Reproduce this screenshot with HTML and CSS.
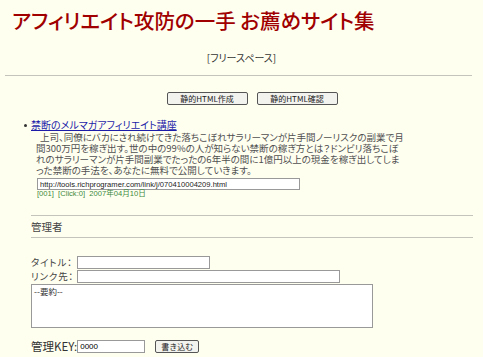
FILE: index.html
```html
<!DOCTYPE html>
<html lang="ja">
<head>
    <meta charset="UTF-8">
    <title>アフィリエイト攻防の一手 お薦めサイト集</title>
    <link rel="stylesheet" href="styles.css">
</head>
<body>
    <h1 class="site-title">アフィリエイト攻防の一手 お薦めサイト集</h1>

    <!-- フリースペース -->
    <div class="free-space">[フリースペース]</div>
    <hr class="rule">

    <div class="tools">
        <button class="btn btn-wide">静的HTML作成</button>
        <button class="btn btn-wide">静的HTML確認</button>
    </div>

    <!-- 登録サイト一覧 -->
    <ul class="entries">
        <li class="entry">
            <a class="entry-link" href="#">禁断のメルマガアフィリエイト講座</a>
            <p class="entry-desc">上司、同僚にバカにされ続けてきた落ちこぼれサラリーマンが片手間ノーリスクの副業で月<br>間300万円を稼ぎ出す。世の中の99%の人が知らない禁断の稼ぎ方とは？ドンビリ落ちこぼ<br>れのサラリーマンが片手間副業でたったの6年半の間に1億円以上の現金を稼ぎ出してしま<br>った禁断の手法を、あなたに無料で公開していきます。</p>
            <input class="entry-url" type="text" value="http://tools.richprogramer.com/link/j/070410004209.html">
            <div class="entry-meta">[001]&nbsp; [Click:0]&nbsp; 2007年04月10日</div>
        </li>
    </ul>

    <!-- 管理者 -->
    <hr class="rule rule-sub">
    <div class="admin-head">管理者</div>
    <hr class="rule rule-sub">

    <form class="admin-form">
        <div class="field-row">
            <label class="field-label">タイトル：</label>
            <input class="field-input title-input" type="text">
        </div>
        <div class="field-row">
            <label class="field-label">リンク先：</label>
            <input class="field-input link-input" type="text">
        </div>
        <textarea class="summary">--要約--</textarea>
        <div class="key-row">
            <label class="key-label">管理KEY:</label>
            <input class="field-input key-input" type="text" value="0000">
            <button class="btn btn-write" type="button">書き込む</button>
        </div>
    </form>
</body>
</html>
```

FILE: styles.css
```css
body {
    margin: 0;
    background: #fffff0;
    font-family: "Noto Sans CJK JP", "Liberation Sans", sans-serif;
    font-feature-settings: "palt";
    color: #444;
}
.site-title {
    margin: 0;
    padding: 8px 0 0 12px;
    font-size: 20.5px;
    line-height: 24px;
    font-weight: 500;
    color: #a00000;
}
.free-space {
    margin-top: 19px;
    text-align: center;
    font-size: 10px;
    line-height: 14px;
    color: #333;
}
.rule {
    margin: 10px 11px 0 5px;
    border: none;
    border-top: 1px solid #c4c4bc;
    height: 0;
}
.tools {
    display: flex;
    justify-content: center;
    gap: 9px;
    margin-top: 16px;
    padding-left: 21px;
}
.btn {
    height: 13px;
    padding: 0;
    font-family: "Noto Sans CJK JP", "Liberation Sans", sans-serif;
    font-size: 8px;
    line-height: 11px;
    color: #222;
    background: #f2f2ee;
    border: 1px solid #555;
    border-radius: 2px;
}
.btn-wide {
    width: 81px;
}
.entries {
    margin: 13px 0 0;
    padding: 0 0 0 31px;
    list-style: none;
}
.entry {
    position: relative;
    font-size: 10px;
    line-height: 14px;
}
.entry::before {
    content: "";
    position: absolute;
    left: -7px;
    top: 6px;
    width: 3px;
    height: 3px;
    border-radius: 50%;
    background: #333;
}
.entry-link {
    font-size: 10px;
    line-height: 14px;
    color: #1c1ca8;
}
.entry-desc {
    margin: 0 0 0 5px;
    font-size: 9.5px;
    line-height: 11px;
    text-indent: 4px;
    color: #505050;
    white-space: nowrap;
}
.entry-url {
    display: block;
    box-sizing: border-box;
    width: 263px;
    height: 12px;
    margin: 2px 0 0 6px;
    padding: 0 2px;
    font-family: "Liberation Sans", sans-serif;
    font-size: 7.6px;
    color: #222;
    background: #fff;
    border: 1px solid #999;
}
.entry-meta {
    margin: -1px 0 0 6px;
    font-family: "Liberation Sans", "Noto Sans CJK JP", sans-serif;
    font-size: 7.6px;
    line-height: 10px;
    color: #3c8a3c;
}
.rule-sub {
    margin: 16px 10px 0 31px;
}
.admin-head + .rule-sub {
    margin-top: 4px;
}
.admin-head {
    margin: 5px 0 0 31px;
    font-size: 10.5px;
    line-height: 12px;
    color: #444;
}
.admin-form {
    margin: 18px 0 0;
    padding-left: 31px;
}
.field-row {
    display: flex;
    align-items: center;
    margin-bottom: 1px;
}
.field-label {
    width: 46px;
    font-size: 9.5px;
    line-height: 13px;
    letter-spacing: 0.8px;
    color: #444;
}
.field-input {
    box-sizing: border-box;
    height: 13px;
    padding: 0 2px;
    background: #fff;
    border: 1px solid #999;
    font-family: "Liberation Sans", sans-serif;
    font-size: 8px;
}
.title-input {
    width: 133px;
}
.link-input {
    width: 263px;
}
.summary {
    display: block;
    box-sizing: border-box;
    width: 342px;
    height: 44px;
    margin: 1px 0 0;
    padding: 1px 2px;
    font-family: "Noto Sans CJK JP", sans-serif;
    font-size: 8.5px;
    line-height: 11px;
    color: #333;
    background: #fff;
    border: 1px solid #999;
    resize: none;
    overflow-y: scroll;
}
.summary::-webkit-scrollbar {
    width: 11px;
    background: #f6f6f4;
}
.summary::-webkit-scrollbar-track {
    border-left: 1px solid #e4e4e0;
}
.summary::-webkit-scrollbar-button:single-button {
    display: block;
    height: 11px;
    background: #fdfdfb;
    border: 1px solid #d4d4d0;
    border-radius: 2px;
}
.key-row {
    display: flex;
    align-items: center;
    margin-top: 11px;
}
.key-label {
    font-size: 11.5px;
    line-height: 14px;
    color: #333;
}
.key-input {
    width: 68px;
}
.btn-write {
    width: 44px;
    margin-left: 10px;
}
```
